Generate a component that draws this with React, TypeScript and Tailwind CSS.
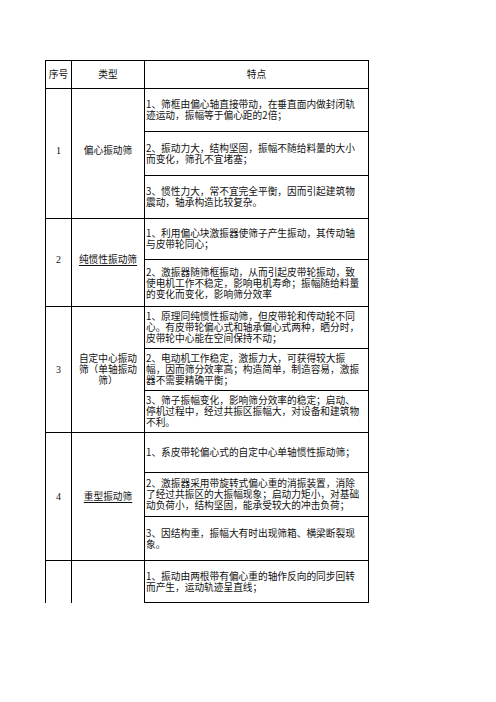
const groups = [
  {
    no: "1",
    type: ["偏心振动筛"],
    underline: false,
    lift: "pb-[7px]",
    items: [
      { h: "h-[43px]", lines: ["1、筛框由偏心轴直接带动，在垂直面内做封闭轨", "迹运动，振幅等于偏心距的2倍；"] },
      { h: "h-[44px]", lines: ["2、振动力大，结构坚固，振幅不随给料量的大小", "而变化，筛孔不宜堵塞；"] },
      { h: "h-[43px]", lines: ["3、惯性力大，常不宜完全平衡，因而引起建筑物", "震动，轴承构造比较复杂。"] },
    ],
  },
  {
    no: "2",
    type: ["纯惯性振动筛"],
    underline: true,
    lift: "pb-[6px]",
    items: [
      { h: "h-[41px]", lines: ["1、利用偏心块激振器使筛子产生振动，其传动轴", "与皮带轮同心；"] },
      {
        h: "h-[47px]",
        lines: [
          "2、激振器随筛框振动，从而引起皮带轮振动，致",
          "使电机工作不稳定，影响电机寿命；振幅随给料量",
          "的变化而变化，影响筛分效率",
        ],
      },
    ],
  },
  {
    no: "3",
    type: ["自定中心振动", "筛（单轴振动", "筛）"],
    underline: false,
    lift: "",
    items: [
      {
        h: "h-[42px]",
        lines: [
          "1、原理同纯惯性振动筛，但皮带轮和传动轮不同",
          "心。有皮带轮偏心式和轴承偏心式两种，晒分时，",
          "皮带轮中心能在空间保持不动；",
        ],
      },
      {
        h: "h-[42px]",
        lines: [
          "2、电动机工作稳定，激振力大，可获得较大振",
          "幅，因而筛分效率高；构造简单，制造容易，激振",
          "器不需要精确平衡；",
        ],
      },
      {
        h: "h-[42px]",
        lines: [
          "3、筛子振幅变化，影响筛分效率的稳定；启动、",
          "停机过程中，经过共振区振幅大，对设备和建筑物",
          "不利。",
        ],
      },
    ],
  },
  {
    no: "4",
    type: ["重型振动筛"],
    underline: true,
    lift: "",
    items: [
      { h: "h-[40px]", lines: ["1、系皮带轮偏心式的自定中心单轴惯性振动筛；"] },
      {
        h: "h-[44px]",
        lines: [
          "2、激振器采用带旋转式偏心重的消振装置，消除",
          "了经过共振区的大振幅现象；启动力矩小，对基础",
          "动负荷小，结构坚固，能承受较大的冲击负荷；",
        ],
      },
      { h: "h-[44px]", lines: ["3、因结构重，振幅大有时出现筛箱、横梁断裂现", "象。"] },
    ],
  },
  {
    no: "",
    type: [],
    underline: false,
    lift: "",
    items: [
      { h: "h-[43px] border-b", lines: ["1、振动由两根带有偏心重的轴作反向的同步回转", "而产生，运动轨迹呈直线；"] },
    ],
  },
]

// join wrapped lines into one text block with explicit breaks
function Lines({ lines, className = "" }: { lines: string[]; className?: string }) {
  return (
    <div className={`whitespace-nowrap ${className}`}>
      {lines.map((l, k) => (
        <span key={k}>
          {k > 0 && <br />}
          {l}
        </span>
      ))}
    </div>
  )
}

export default function App() {
  return (
    <div
      className="w-[496px] h-[702px] bg-white text-[#111] text-[9.7px] leading-[11px]"
      style={{ fontFamily: '"Noto Sans CJK SC", "Noto Sans", sans-serif' }}
    >
      <div className="pt-[60px] pl-[45px]">
        <div className="w-[324px] flex flex-col">
          {/* header */}
          <div className="flex h-[28px]">
            <div className="w-[26px] border-l border-t border-black flex items-center justify-center">序号</div>
            <div className="w-[73px] border-l border-t border-black flex items-center justify-center">类型</div>
            <div className="w-[225px] border-l border-t border-r border-black flex items-center justify-center">特点</div>
          </div>

          {groups.map((g, i) => (
            <div key={i} className="flex">
              <div className={`w-[26px] border-l border-t border-black flex items-center justify-center ${g.lift}`}>
                <span style={{ fontFamily: '"Liberation Serif", serif' }} className="text-[10px]">
                  {g.no}
                </span>
              </div>
              <div className={`w-[73px] border-l border-t border-black flex items-center justify-center ${g.lift}`}>
                {g.underline ? (
                  <span className="whitespace-nowrap underline underline-offset-[2px]">{g.type[0]}</span>
                ) : (
                  <Lines lines={g.type} className="text-center" />
                )}
              </div>
              <div className="w-[225px] flex flex-col">
                {g.items.map((it, j) => (
                  <div key={j} className={`${it.h} border-l border-t border-r border-black flex items-center pl-[1px]`}>
                    <Lines lines={it.lines} />
                  </div>
                ))}
              </div>
            </div>
          ))}
        </div>
      </div>
    </div>
  )
}
